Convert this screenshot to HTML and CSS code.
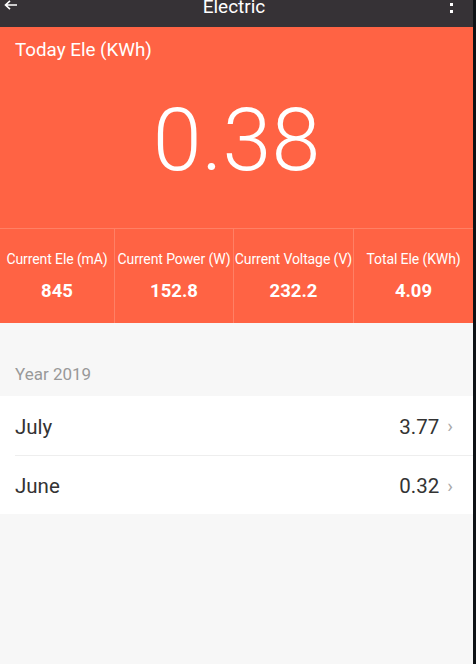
FILE: index.html
```html
<!DOCTYPE html>
<html lang="en">
<head>
    <meta charset="UTF-8">
    <meta name="viewport" content="width=device-width, initial-scale=1.0">
    <title>Electric</title>
    <link rel="stylesheet" href="styles.css">
</head>
<body>
    <div class="app">
        <div class="topbar">
            <svg class="back" width="14" height="12" viewBox="0 0 14 12">
                <path d="M13 5H2M6 0.8L1.5 5 6 9.2" stroke="#fff" stroke-width="1.6" fill="none"/>
            </svg>
            <span class="title">Electric</span>
            <span class="more"><i></i><i></i></span>
        </div>

        <div class="today">
            <div class="today-label">Today Ele (KWh)</div>
            <div class="today-value">0.38</div>
        </div>

        <div class="stats">
            <div class="stat">
                <div class="stat-label">Current Ele (mA)</div>
                <div class="stat-value">845</div>
            </div>
            <div class="stat">
                <div class="stat-label">Current Power (W)</div>
                <div class="stat-value">152.8</div>
            </div>
            <div class="stat">
                <div class="stat-label">Current Voltage (V)</div>
                <div class="stat-value">232.2</div>
            </div>
            <div class="stat">
                <div class="stat-label">Total Ele (KWh)</div>
                <div class="stat-value">4.09</div>
            </div>
        </div>

        <div class="year">Year 2019</div>
        <div class="list">
            <div class="row">
                <span class="month">July</span>
                <span class="amount">3.77</span>
                <span class="chev">&rsaquo;</span>
            </div>
            <div class="row">
                <span class="month">June</span>
                <span class="amount">0.32</span>
                <span class="chev">&rsaquo;</span>
            </div>
        </div>
    </div>
</body>
</html>
```

FILE: styles.css
```css
body {
    margin: 0;
    background-color: #0e1216;
    font-family: Roboto, "Noto Sans", sans-serif;
}

.app {
    width: 473px;
    height: 664px;
    background-color: #f7f7f7;
}

.topbar {
    height: 27px;
    background-color: #363236;
    display: flex;
    align-items: center;
    justify-content: space-between;
    padding: 0 20px 0 4px;
    overflow: hidden;
}
.back {
    align-self: flex-start;
}
.title {
    color: #fff;
    font-size: 19px;
    line-height: 1;
    margin-top: -15px;
}
.more {
    display: flex;
    flex-direction: column;
    gap: 4px;
    align-self: flex-start;
    margin-top: 3px;
}
.more i {
    width: 3px;
    height: 3px;
    background: #fff;
}

.today {
    background-color: #ff6344;
    height: 201px;
    padding: 12px 15px 0;
    box-sizing: border-box;
    color: #fff;
}
.today-label {
    font-size: 18.8px;
}
.today-value {
    text-align: center;
    font-size: 88px;
    font-weight: 300;
    line-height: 1;
    margin-top: 35px;
}

.stats {
    display: grid;
    grid-template-columns: 114px 119px 120px 120px;
    background-color: #ff6344;
    border-top: 1px solid #ff8065;
    height: 94px;
    color: #fff;
}
.stat {
    border-left: 1px solid #ff8065;
    text-align: center;
    padding-top: 22px;
}
.stat:first-child {
    border-left: none;
}
.stat-label {
    font-size: 14px;
    white-space: nowrap;
    letter-spacing: -0.1px;
    margin: 0 -6px;
}
.stat-value {
    font-size: 18.5px;
    font-weight: bold;
    margin-top: 13px;
}

.year {
    padding: 41px 15px 0;
    height: 32px;
    color: #999;
    font-size: 17px;
}
.list {
    background: #fff;
}
.row {
    height: 59px;
    box-sizing: border-box;
    padding-top: 2px;
    display: flex;
    align-items: center;
    padding-right: 20px;
    margin-left: 15px;
    border-top: 1px solid #eeeeee;
    color: #333;
    font-size: 20.5px;
}
.row:first-child {
    border-top: none;
}
.month {
    flex: 1;
}
.chev {
    color: #aaa;
    font-size: 19px;
    margin-left: 8px;
    margin-top: -2px;
}
```
